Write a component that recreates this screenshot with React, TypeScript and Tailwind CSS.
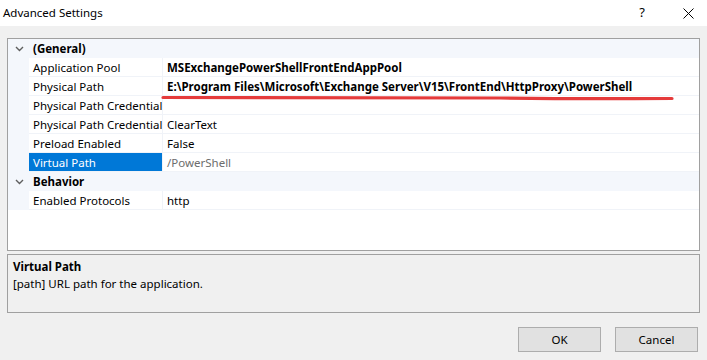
import React from 'react'

const font = { fontFamily: '"Noto Sans", "Open Sans", sans-serif' }

type Row =
  | { kind: 'cat'; label: string }
  | { kind: 'prop'; name: string; value: string; bold?: boolean; selected?: boolean; dim?: boolean }

const rows: Row[] = [
  { kind: 'cat', label: '(General)' },
  { kind: 'prop', name: 'Application Pool', value: 'MSExchangePowerShellFrontEndAppPool', bold: true },
  { kind: 'prop', name: 'Physical Path', value: 'E:\\Program Files\\Microsoft\\Exchange Server\\V15\\FrontEnd\\HttpProxy\\PowerShell', bold: true },
  { kind: 'prop', name: 'Physical Path Credentials', value: '' },
  { kind: 'prop', name: 'Physical Path Credentials', value: 'ClearText' },
  { kind: 'prop', name: 'Preload Enabled', value: 'False' },
  { kind: 'prop', name: 'Virtual Path', value: '/PowerShell', selected: true, dim: true },
  { kind: 'cat', label: 'Behavior' },
  { kind: 'prop', name: 'Enabled Protocols', value: 'http' },
]

function Chevron() {
  return (
    <svg width="9" height="6" viewBox="0 0 9 6" className="text-[#5f5f5f]">
      <path d="M1 1l3.5 3.5L8 1" fill="none" stroke="currentColor" strokeWidth="1.4" />
    </svg>
  )
}

function GridRow({ row }: { row: Row }) {
  if (row.kind === 'cat') {
    return (
      <div className="flex h-[19px] items-center bg-[#f4f7fc]">
        <div className="flex w-[21px] justify-center pl-[1px]">
          <Chevron />
        </div>
        <div className="pl-[4px] pt-[1px] text-[11.5px] font-bold text-black">{row.label}</div>
      </div>
    )
  }
  return (
    <div className="flex h-[19px] bg-[#f4f7fc]">
      <div className="w-[21px] shrink-0" />
      <div
        className={
          'w-[134px] shrink-0 overflow-hidden whitespace-nowrap border-b border-r border-[#f0f3f8] pl-[4px] pt-[1px] text-[11.5px] leading-[17px] ' +
          (row.selected ? 'bg-[#0078d7] text-white' : 'bg-white text-black')
        }
      >
        {row.name}
      </div>
      <div
        className={
          'min-w-0 flex-1 overflow-hidden whitespace-nowrap border-b border-[#f0f3f8] bg-white pl-[4px] pt-[1px] text-[11.5px] leading-[17px] ' +
          (row.bold ? 'font-bold ' : '') +
          (row.dim ? 'text-[#6d6d6d]' : 'text-black')
        }
      >
        {row.value}
      </div>
    </div>
  )
}

export default function App() {
  return (
    <div className="relative h-[360px] w-[707px] overflow-hidden bg-[#f0f0f0]" style={font}>
      <div className="flex h-[26px] items-center bg-white pl-[3px] pr-[13px] text-[11.5px] text-black">
        <span className="flex-1">Advanced Settings</span>
        <span className="mr-[38px] text-[13px]">?</span>
        <svg width="11" height="11" viewBox="0 0 11 11">
          <path d="M0.5 0.5l10 10M10.5 0.5l-10 10" stroke="#000" strokeWidth="1" />
        </svg>
      </div>

      <div className="mx-[7px] mt-[12px] flex h-[213px] flex-col border border-[#a0a0a0] bg-white">
        {rows.map((r, i) => (
          <GridRow key={i} row={r} />
        ))}
      </div>

      <div className="mx-[7px] mt-[3px] h-[59px] border border-[#a0a0a0] px-[5px] pt-[3px] text-[11.5px] text-black">
        <div className="font-bold leading-[17px]">Virtual Path</div>
        <div className="leading-[17px]">[path] URL path for the application.</div>
      </div>

      <div className="mt-[14px] flex justify-end gap-[14px] pr-[9px]">
        <button className="h-[25px] w-[83px] border border-[#adadad] bg-[#e1e1e1] text-[11.5px] text-black">OK</button>
        <button className="h-[25px] w-[83px] border border-[#adadad] bg-[#e1e1e1] text-[11.5px] text-black">Cancel</button>
      </div>

      <svg className="pointer-events-none absolute left-0 top-0" width="707" height="360">
        <path
          d="M163 97.5 C 300 98.5, 420 97, 500 98 S 620 98.5, 672 98.5"
          fill="none"
          stroke="#e53b3b"
          strokeWidth="3.2"
          strokeLinecap="round"
        />
      </svg>
    </div>
  )
}
